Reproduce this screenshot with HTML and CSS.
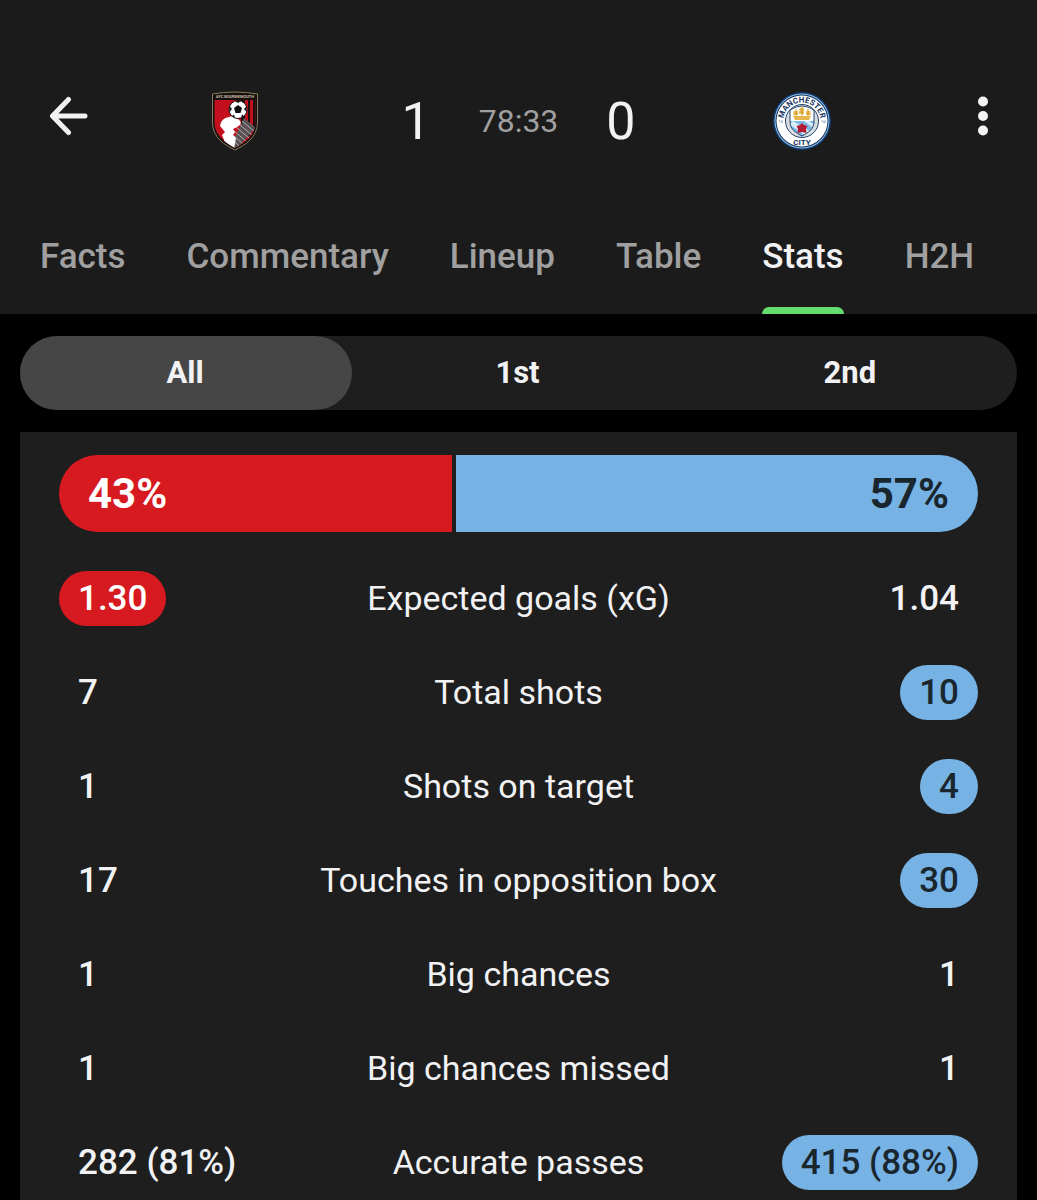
FILE: index.html
```html
<!DOCTYPE html>
<html lang="en">
<head>
  <meta charset="utf-8" />
  <meta name="viewport" content="width=device-width, initial-scale=1" />
  <title>Bournemouth 1 - 0 Manchester City</title>
  <link rel="stylesheet" href="styles.css">
</head>
<body>
  <header class="header">
    <div class="topbar">
      <button class="icon-btn back" aria-label="Back">
        <svg width="40" height="40" viewBox="0 0 40 40" fill="none" stroke="#f2f2f2" stroke-width="5" stroke-linecap="round" stroke-linejoin="round">
          <path d="M20.500 3.500L4.500 20L20.500 36.500M5 20H37"/>
        </svg>
      </button>

      <div class="scoreboard">
        <div class="team">
          <svg width="48" height="60" viewBox="0 0 48 60" role="img" aria-label="AFC Bournemouth">
            <clipPath id="shield"><path d="M3.500 4Q24 -1 44.500 4V31C44.500 45 33 52 24 57C15 52 3.500 45 3.500 31Z"/></clipPath>
            <path d="M1.500 3Q24 -1 46.500 3V31C46.500 47 34 54 24 59C14 54 1.500 47 1.500 31Z" fill="#15100f" stroke="#8c7b5c" stroke-width="1"/>
            <g clip-path="url(#shield)">
              <rect x="3" y="9" width="42" height="50" fill="#c4101e"/>
              <path d="M30 9H34V45H30ZM37 9H39V45H37ZM42 9H45V45H42Z" fill="#1a1010"/>
              <path d="M20 55L33 27L45 37L24 59Z" fill="#5a5355"/>
              <path d="M25 36l14 12M28 33l14 12M31 30l13 11M23 40l13 11M22 44l11 10M21 48l8 8" stroke="#b0aaab" stroke-width="1"/>
              <path d="M9 35C10 29 13 27 18 26C22 24 26 26 28 29C31 31 30 34 26 36L22 38L24 41L22 44L25 47L23 58L15 54L11 44L14 41Z" fill="#fff"/>
            </g>
            <circle cx="27" cy="18.500" r="9" fill="#fff" stroke="#1a1010" stroke-width="1"/>
            <path d="M27 14L31 17L29.500 22H24.500L23 17Z" fill="#111"/>
            <path d="M24 10H30L27 12ZM35.500 15V21L33 18ZM18.500 15V21L21 18ZM21 25L23 23.500L24 27ZM33 25L31 23.500L30 27Z" fill="#111"/>
            <text x="24" y="7" class="crest-name-small">AFC BOURNEMOUTH</text>
          </svg>
        </div>

        <div class="score">
          <span class="goals">1</span>
          <span class="clock">78:33</span>
          <span class="goals">0</span>
        </div>

        <div class="team">
          <svg width="58" height="58" viewBox="0 0 58 58" role="img" aria-label="Manchester City">
            <defs>
              <path id="arc-top" d="M10.500 29A18.500 18.500 0 0 1 47.500 29"/>
              <path id="cityshield"  d="M17 18Q29 10 41 18V30C41 37 35 41 29 44C23 41 17 37 17 30Z"/>
              <clipPath id="city-clip"><use href="#cityshield"/></clipPath>
            </defs>
            <circle cx="29" cy="29" r="29" fill="#123a70"/>
            <circle cx="29" cy="29" r="27.500" fill="#8fc3e8"/>
            <circle cx="29" cy="29" r="26.500" fill="#18335f"/>
            <circle cx="29" cy="29" r="25.500" fill="#fff"/>
            <circle cx="29" cy="29" r="16.500" fill="#d8dde0" stroke="#25446f" stroke-width="1"/>
            <g clip-path="url(#city-clip)">
              <rect x="15" y="10" width="28" height="19" fill="#fff"/>
              <rect x="15" y="29" width="28" height="17" fill="#7db9e4"/>
              <path d="M16 32L20 29L42 42V46H36ZM31 29H36L43 34V38Z" fill="#d9ecf8"/>
            </g>
            <use href="#cityshield" fill="none" stroke="#25446f" stroke-width="1"/>
            <path d="M20 24H38L36 28H22ZM21 19H25V23H20ZM26.500 16H31V22H26ZM33 19H37L38 23H33Z" fill="#e5b649"/>
            <path d="M29 14V24M23 17V24M35 17V24" stroke="#d0a03a" stroke-width="1"/>
            <path d="M29 31L31 33L34.500 34L33 37L33.500 41L29 40L24.500 41L25 37L23.500 34L27 33Z" fill="#b31b34"/>
            <text class="crest-name"><textPath href="#arc-top" startOffset="50%">MANCHESTER</textPath></text>
            <text x="29" y="53" class="crest-name">CITY</text>
            <text x="7.500" y="31" class="crest-year">18</text>
            <text x="50.500" y="31" class="crest-year">94</text>
          </svg>
        </div>
      </div>

      <button class="icon-btn" aria-label="More options">
        <svg width="40" height="40" viewBox="0 0 40 40" fill="#f2f2f2">
          <circle cx="20" cy="5.500" r="5"/>
          <circle cx="20" cy="20" r="5"/>
          <circle cx="20" cy="34.500" r="5"/>
        </svg>
      </button>
    </div>

    <nav class="tabs">
      <a href="#facts">Facts</a>
      <a href="#commentary">Commentary</a>
      <a href="#lineup">Lineup</a>
      <a href="#table">Table</a>
      <a href="#stats" class="active" aria-current="page">Stats</a>
      <a href="#h2h">H2H</a>
    </nav>
  </header>

  <main class="content">
    <div class="periods">
      <button class="selected" aria-pressed="true">All</button>
      <button aria-pressed="false">1st</button>
      <button aria-pressed="false">2nd</button>
    </div>

    <section class="panel" id="stats">
      <div class="possession">
        <div class="home" style="width: 43%">43%</div>
        <div class="away" style="width: 57%">57%</div>
      </div>

      <table class="stats">
        <tr>
          <td><span class="value home">1.30</span></td>
          <th scope="row">Expected goals (xG)</th>
          <td><span class="value">1.04</span></td>
        </tr>
        <tr>
          <td><span class="value">7</span></td>
          <th scope="row">Total shots</th>
          <td><span class="value away">10</span></td>
        </tr>
        <tr>
          <td><span class="value">1</span></td>
          <th scope="row">Shots on target</th>
          <td><span class="value away">4</span></td>
        </tr>
        <tr>
          <td><span class="value">17</span></td>
          <th scope="row">Touches in opposition box</th>
          <td><span class="value away">30</span></td>
        </tr>
        <tr>
          <td><span class="value">1</span></td>
          <th scope="row">Big chances</th>
          <td><span class="value">1</span></td>
        </tr>
        <tr>
          <td><span class="value">1</span></td>
          <th scope="row">Big chances missed</th>
          <td><span class="value">1</span></td>
        </tr>
        <tr>
          <td><span class="value">282 (81%)</span></td>
          <th scope="row">Accurate passes</th>
          <td><span class="value away">415 (88%)</span></td>
        </tr>
      </table>
    </section>
  </main>
</body>
</html>
```

FILE: styles.css
```css
* {
  box-sizing: border-box;
}

body {
  font-family: Roboto, sans-serif;
  background: #000;
  color: #f2f2f4;
  margin: 0;
}

button {
  font-family: inherit;
  color: inherit;
  background: none;
  border: none;
  padding: 0;
  cursor: pointer;
}

/* header */
.header {
  background: #1b1b1b;
  padding-top: 82px;
}

.topbar {
  display: flex;
  align-items: flex-start;
  padding: 0 20px;
}

.icon-btn {
  display: flex;
  align-items: center;
  justify-content: center;
  width: 68px;
  height: 68px;
}

.icon-btn.back {
  justify-content: flex-end;
}

.scoreboard {
  flex: 1;
  display: grid;
  grid-template-columns: 1fr auto 1fr;
  align-items: center;
  height: 78px;
}

.team {
  display: flex;
  justify-content: center;
}

.score {
  display: flex;
  align-items: center;
  gap: 48px;
  padding: 0 20px;
}

.goals {
  font-size: 52px;
}

.clock {
  font-size: 32px;
  color: #a0a0a0;
}

.crest-name {
  font-size: 8px;
  font-weight: 700;
  fill: #18335f;
  text-anchor: middle;
}

.crest-name-small {
  font-size: 4px;
  font-weight: 700;
  fill: #c9bda4;
  text-anchor: middle;
}

.crest-year {
  font-size: 4px;
  fill: #6a8db5;
  text-anchor: middle;
}

.tabs {
  display: flex;
  gap: 61px;
  padding: 40px 40px 0;
}

.tabs a {
  position: relative;
  font-size: 35px;
  font-weight: 500;
  line-height: 114px;
  color: #a0a0a0;
  text-decoration: none;
}

.tabs a.active {
  color: #f2f2f4;
}

.tabs a.active::after {
  content: "";
  position: absolute;
  left: 0;
  right: 0;
  bottom: 0;
  height: 7px;
  border-radius: 7px 7px 0 0;
  background: #63de6e;
}

/* content */
.content {
  padding: 22px 20px 0;
}

.periods {
  display: flex;
  background: #1e1e1e;
  border-radius: 37px;
}

.periods button {
  flex: 1;
  height: 74px;
  padding: 0 2px 2px 0;
  border-radius: 37px;
  font-size: 31px;
  font-weight: 700;
}

.periods .selected {
  background: #464646;
}

.panel {
  margin-top: 22px;
  padding: 23px 39px 10px;
  background: #1e1e1e;
}

.home {
  background: #d71920;
  color: #fff;
}

.away {
  background: #76b2e4;
  color: #1a262e;
}

.possession {
  display: flex;
  gap: 4px;
  border-radius: 39px;
  overflow: hidden;
  font-size: 42px;
  font-weight: 700;
  line-height: 77px;
}

.possession div {
  padding: 0 29px;
}

.possession .away {
  text-align: right;
}

.stats {
  width: 100%;
  table-layout: fixed;
  border-collapse: collapse;
  font-size: 35px;
  line-height: 55px;
}

.stats td,
.stats th {
  padding: 39px 0 0;
}

.stats td {
  width: 25%;
}

.stats td:last-child {
  text-align: right;
}

.stats th {
  font-size: 34px;
  font-weight: 400;
}

.value {
  display: inline-block;
  vertical-align: top;
  padding: 0 19px;
  border-radius: 28px;
  font-weight: 500;
  white-space: nowrap;
}
```
